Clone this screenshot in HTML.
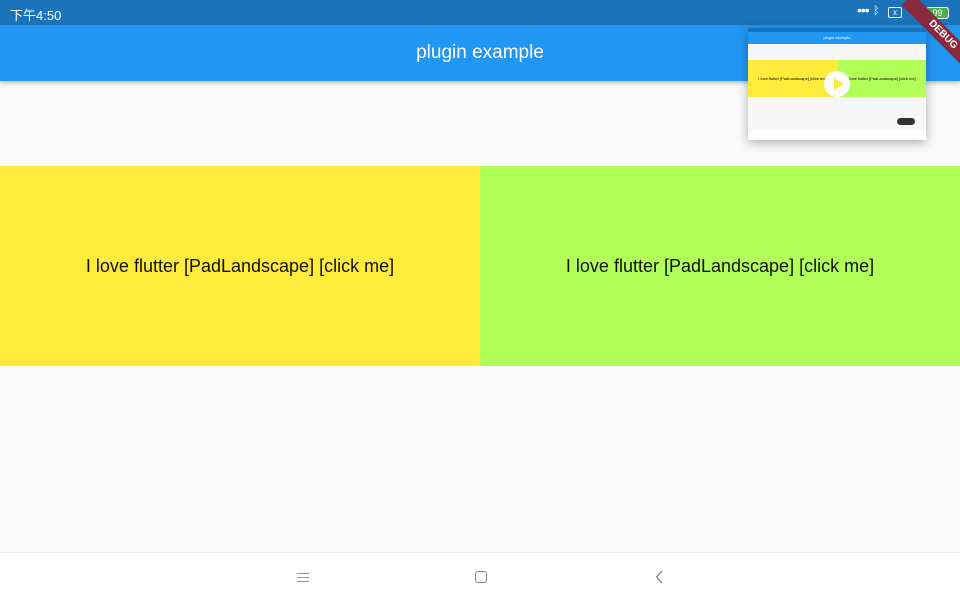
<!DOCTYPE html>
<html><head><meta charset="utf-8"><style>
*{margin:0;padding:0;box-sizing:border-box}
body{width:960px;height:600px;overflow:hidden;background:#fafafa;font-family:"Liberation Sans","Noto Sans CJK SC",sans-serif;position:relative}
.sb{position:absolute;left:0;top:0;width:960px;height:25px;background:#1b74ba;color:#fff;font-size:13px}
.ab{position:absolute;left:0;top:25px;width:960px;height:56px;background:#2196f3;box-shadow:0 2px 4px rgba(0,0,0,.25);color:#fff;font-size:19px;text-align:center;line-height:56px}
.row{position:absolute;top:166px;height:200px;width:480px;font-size:18px;text-align:center;line-height:200px;color:#111}
.nav{position:absolute;left:0;top:552px;width:960px;height:48px;background:#fff;border-top:1px solid #eee}
.th{position:absolute;left:748px;top:28px;width:178px;height:112px;background:#f7f7f7;box-shadow:0 3px 10px rgba(0,0,0,.3);overflow:hidden}
</style></head><body>
<div class="sb"><span style="position:absolute;left:10px;top:5px">下午4:50</span>
<span style="position:absolute;left:857px;top:2px;font-size:14px;letter-spacing:-1px">•••</span>
<span style="position:absolute;left:873px;top:5px;font-size:11px">ᛒ</span>
<span style="position:absolute;left:888px;top:7px;width:14px;height:11px;border:1px solid #fff;border-radius:2px;font-size:8px;line-height:9px;text-align:center">x</span>
<svg style="position:absolute;left:906px;top:6px" width="15" height="12" viewBox="0 0 15 12"><path d="M7.5 11 L0 3 A11 11 0 0 1 15 3 Z" fill="#fff"/></svg>
<span style="position:absolute;left:926px;top:7px;width:23px;height:12px;border:1px solid #fff;border-radius:3px;background:#4caf50;font-size:9px;line-height:10px;text-align:center">99</span>
</div>
<div class="ab">plugin example</div>
<div style="position:absolute;left:905px;top:0;width:100px;height:16px;background:#8a2a3e;color:#fff;font-size:10px;font-weight:bold;text-align:center;line-height:16px;transform-origin:0 0;transform:translate(8px,-6px) rotate(45deg)">DEBUG</div>
<div class="row" style="left:0;background:#ffeb3b">I love flutter [PadLandscape] [click me]</div>
<div class="row" style="left:480px;background:#b2ff59">I love flutter [PadLandscape] [click me]</div>
<div class="th">
<div style="height:4px;background:#1b74ba"></div>
<div style="height:12px;background:#2196f3;color:#fff;font-size:4px;text-align:center;line-height:12px">plugin example</div>
<div style="position:absolute;top:32px;left:0;width:89px;height:37px;background:#ffeb3b;font-size:4px;line-height:37px;text-align:center">I love flutter [PadLandscape] [click me]</div>
<div style="position:absolute;top:32px;left:89px;width:89px;height:37px;background:#b2ff59;font-size:4px;line-height:37px;text-align:center">I love flutter [PadLandscape] [click me]</div>
<div style="position:absolute;left:76px;top:43px;width:26px;height:26px;border-radius:50%;background:#fff"></div>
<div style="position:absolute;left:86px;top:50px;width:0;height:0;border-left:10px solid #ffeb3b;border-top:6px solid transparent;border-bottom:6px solid transparent"></div>
<div style="position:absolute;left:149px;top:90px;width:18px;height:7px;border-radius:4px;background:#333"></div>
<div style="position:absolute;top:103px;left:0;width:178px;height:9px;background:#fff"></div>
</div>
<div class="nav">
<svg style="position:absolute;left:297px;top:19px" width="12" height="11"><path d="M0 1.5H12M0 5.5H12M0 9.5H12" stroke="#999" stroke-width="1"/></svg>
<div style="position:absolute;left:475px;top:18px;width:12px;height:12px;border:1.5px solid #888;border-radius:3px"></div>
<svg style="position:absolute;left:655px;top:17px" width="9" height="14"><path d="M7 1L1.5 7L7 13" stroke="#888" stroke-width="1.3" fill="none"/></svg>
</div>
</body></html>
